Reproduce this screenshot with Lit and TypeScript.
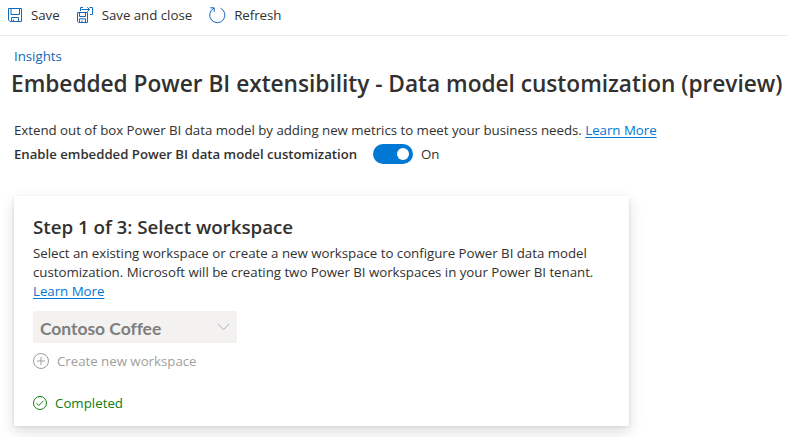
import { LitElement, html, css, svg } from "lit";
import { customElement, state } from "lit/decorators.js";

const saveIcon = svg`
  <path d="M.5 .5H13.5V13.5H2L.5 12Z" />
  <path d="M3 .5V6.5H11.5V.5" />
  <path d="M3.5 13.5V9.5H10.5V13.5M5.5 13.5V11.5" />`;

const saveCloseIcon = svg`
  <path d="M.5 5.5H10.5V15.5H1.5L.5 14.5Z" />
  <path d="M2.5 5.5V9.5H8.5V5.5M2.5 15.5V11.8H8.5V15.5M5 15.5V13.5" />
  <path d="M3.5 4V.5H6M12.5 .5H15.5V7.5H13" />
  <path d="M4.5 2.5H12.5M10.3 .3L12.5 2.5L10.3 4.7" />`;

const refreshIcon = svg`
  <path d="M11.6 1.2A7.6 7.6 0 1 1 5 1.2" />
  <path d="M1.2 .8H5.2V4.9" />`;

@customElement("command-button")
export class CommandButton extends LitElement {
  static properties = { label: {}, icon: { attribute: false }, box: { type: Number } };
  declare label: string;
  declare icon: unknown;
  declare box: number;

  static styles = css`
    :host { display: flex; align-items: center; height: 30px; }
    svg { overflow: visible; fill: none; stroke: #1468b8; stroke-width: 1; margin-right: 9px; flex: none; }
    span { line-height: 19px; }
  `;

  render() {
    return html`<svg width=${this.box} height=${this.box} viewBox="0 0 ${this.box} ${this.box}">${this.icon}</svg><span>${this.label}</span>`;
  }
}

@customElement("app-root")
export class AppRoot extends LitElement {
  @state() private enabled = true;

  static styles = css`
    :host {
      display: block;
      height: 437px;
      overflow: hidden;
      background: #fff;
      color: #323130;
      font: 400 13.3px/19px "Open Sans", "Noto Sans", sans-serif;
      letter-spacing: -0.03px;
      white-space: nowrap;
    }
    .toolbar {
      display: flex;
      box-sizing: border-box;
      height: 36px;
      padding: 0 8px;
      border-bottom: 1px solid #edebe9;
    }
    .save { margin-right: 17px; }
    .save-close { margin-right: 17px; }
    .crumb { display: block; margin: 11px 0 0 14px; color: #1468b8; text-decoration: none; }
    h1 { margin: 2px 0 0 11px; font-size: 22.7px; font-weight: 600; line-height: 32px; }
    .intro { margin: 21px 0 0 14px; }
    .link { color: #0078d4; text-decoration: underline; text-underline-offset: 2px; }
    .setting { display: flex; align-items: center; height: 20px; margin: 4px 0 0 14px; }
    .setting-label { width: 359px; font-size: 13.2px; font-weight: 600; letter-spacing: -0.01px; }
    .toggle {
      display: flex;
      align-items: center;
      justify-content: flex-end;
      box-sizing: border-box;
      width: 40px;
      height: 20px;
      padding: 0 4px;
      margin-right: 8px;
      border: 0;
      border-radius: 10px;
      background: #0078d4;
    }
    .knob { width: 12px; height: 12px; border-radius: 50%; background: #fff; }
    .card {
      box-sizing: border-box;
      width: 615px;
      height: 230px;
      margin: 32px 0 0 14px;
      padding: 18px 19px;
      background: #fff;
      box-shadow: 0 6.4px 14.4px rgba(0, 0, 0, 0.132), 0 1.2px 3.6px rgba(0, 0, 0, 0.108);
    }
    h2 { margin: 0; font-size: 18.8px; font-weight: 600; line-height: 26px; }
    .card p { margin: 4px 0 0; }
    .dropdown {
      display: flex;
      align-items: center;
      justify-content: space-between;
      box-sizing: border-box;
      width: 204px;
      height: 32px;
      margin-top: 10px;
      padding: 3px 7px 0;
      border-radius: 2px;
      background: #f3f2f1;
      color: #7f7f7f;
      font: 700 17.5px/24px Lato, "Open Sans", sans-serif;
      letter-spacing: -0.05px;
    }
    .chevron { fill: none; stroke: #a6b1bd; margin-bottom: 4px; }
    .create { display: flex; align-items: center; height: 20px; margin-top: 8px; color: #a19f9d; }
    .create svg { fill: none; stroke: #a19f9d; margin-right: 8px; }
    .status { display: flex; align-items: center; height: 20px; margin-top: 22px; color: #107c10; letter-spacing: 0; }
    .status svg { fill: none; stroke: #107c10; margin-right: 8px; }
  `;

  render() {
    return html`
      <div class="toolbar">
        <command-button class="save" label="Save" .icon=${saveIcon} .box=${14}></command-button>
        <command-button class="save-close" label="Save and close" .icon=${saveCloseIcon} .box=${16}></command-button>
        <command-button label="Refresh" .icon=${refreshIcon} .box=${16}></command-button>
      </div>
      <a class="crumb">Insights</a>
      <h1>Embedded Power BI extensibility - Data model customization (preview)</h1>
      <div class="intro">Extend out of box Power BI data model by adding new metrics to meet your business needs. <a class="link">Learn More</a></div>
      <div class="setting">
        <span class="setting-label">Enable embedded Power BI data model customization</span>
        <button class="toggle" role="switch" aria-checked=${this.enabled}><span class="knob"></span></button>
        <span>${this.enabled ? "On" : "Off"}</span>
      </div>
      <section class="card">
        <h2>Step 1 of 3: Select workspace</h2>
        <p>
          Select an existing workspace or create a new workspace to configure Power BI data model<br />
          customization. Microsoft will be creating two Power BI workspaces in your Power BI tenant.<br />
          <a class="link">Learn More</a>
        </p>
        <div class="dropdown">
          <span>Contoso Coffee</span>
          <svg class="chevron" width="13" height="8" viewBox="0 0 13 8"><path d="M.6 .8L6.5 6.7L12.4 .8" /></svg>
        </div>
        <div class="create">
          <svg width="16" height="16" viewBox="0 0 16 16"><circle cx="8" cy="8" r="7.5" /><path d="M8 4V12M4 8H12" /></svg>
          <span>Create new workspace</span>
        </div>
        <div class="status">
          <svg width="14" height="14" viewBox="0 0 14 14"><circle cx="7" cy="7" r="6.5" /><path d="M3.5 7.2L5.8 9.5L10.5 4.8" /></svg>
          <span>Completed</span>
        </div>
      </section>
    `;
  }
}
